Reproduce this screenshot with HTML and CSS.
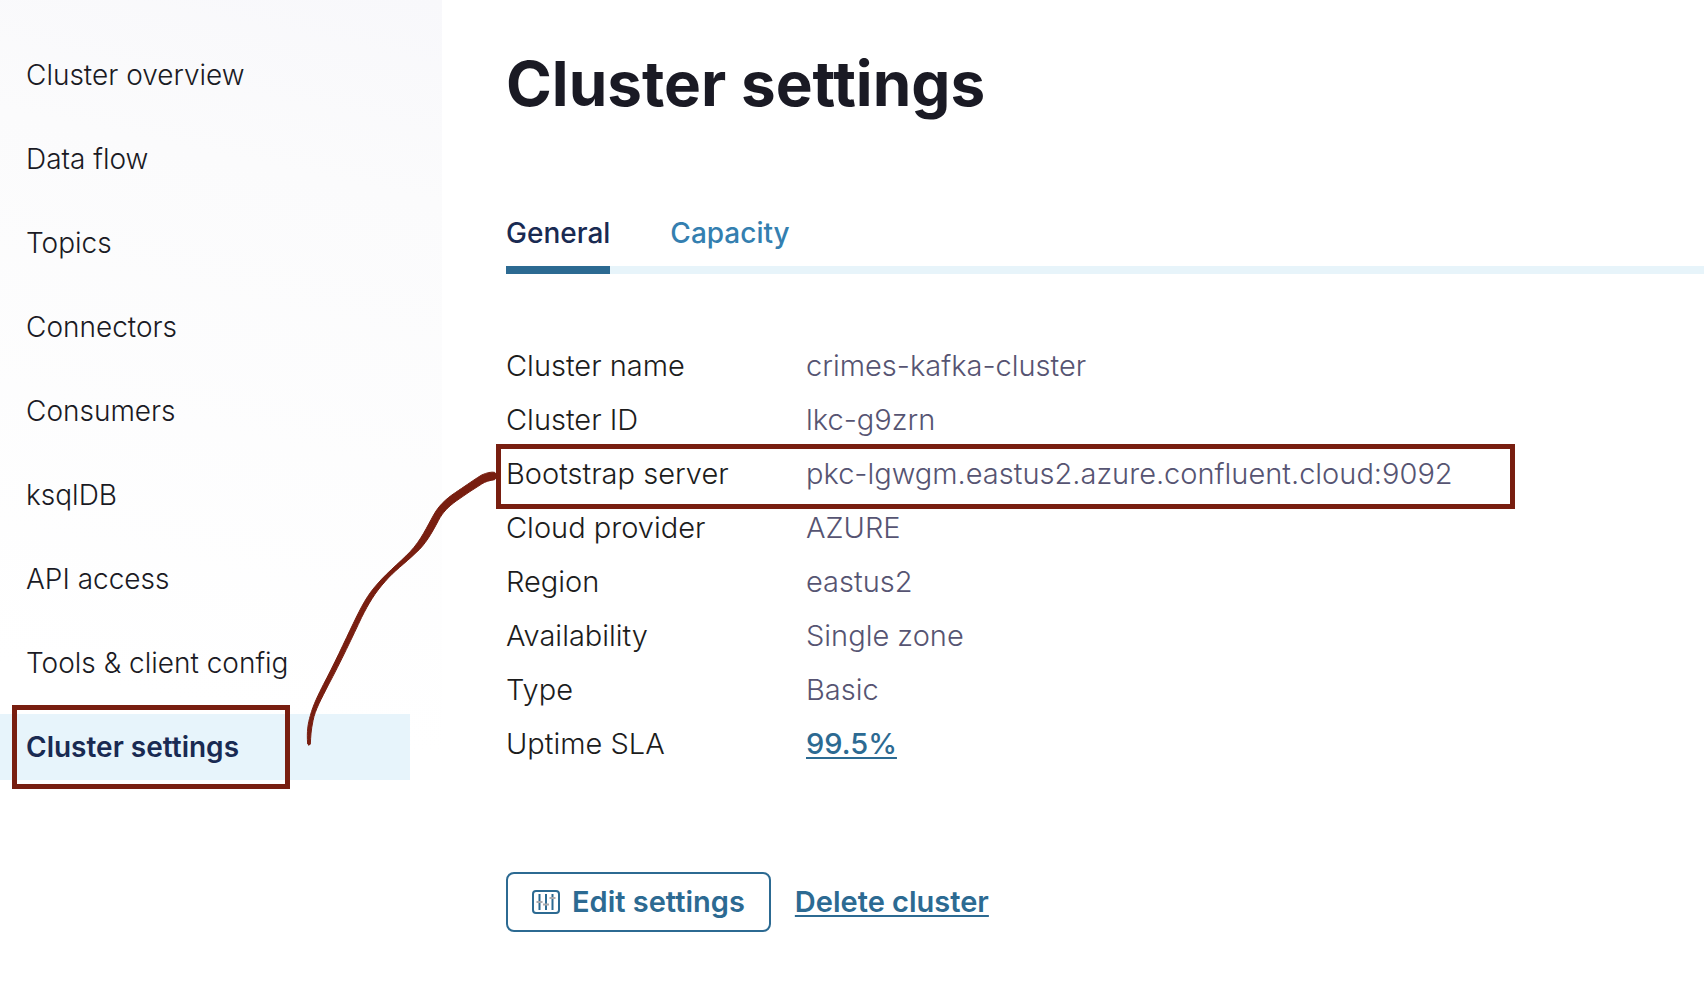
FILE: index.html
```html
<!DOCTYPE html>
<html lang="en">
<head>
<meta charset="utf-8">
<meta name="viewport" content="width=device-width, initial-scale=1">
<title>Cluster settings</title>
<link rel="stylesheet" href="styles.css">
</head>
<body>
<div class="page">
  <nav class="sidebar" aria-label="Cluster">
    <ul class="nav">
      <li class="nav-item"><a class="nav-link" href="#overview">Cluster overview</a></li>
      <li class="nav-item"><a class="nav-link" href="#flow">Data flow</a></li>
      <li class="nav-item"><a class="nav-link" href="#topics">Topics</a></li>
      <li class="nav-item"><a class="nav-link" href="#connectors">Connectors</a></li>
      <li class="nav-item"><a class="nav-link" href="#consumers">Consumers</a></li>
      <li class="nav-item"><a class="nav-link" href="#ksqldb">ksqlDB</a></li>
      <li class="nav-item"><a class="nav-link" href="#api">API access</a></li>
      <li class="nav-item"><a class="nav-link" href="#tools">Tools &amp; client config</a></li>
      <li class="nav-item nav-item-marked"><a class="nav-link nav-link-current" href="#settings" aria-current="page">Cluster settings</a></li>
    </ul>
  </nav>

  <main class="content">
    <h1 class="title">Cluster settings</h1>

    <div class="tabs" role="tablist">
      <button class="tab tab-active" type="button" role="tab" aria-selected="true">General</button>
      <button class="tab" type="button" role="tab" aria-selected="false">Capacity</button>
    </div>

    <dl class="details">
      <div class="row"><dt class="label">Cluster name</dt><dd class="value">crimes-kafka-cluster</dd></div>
      <div class="row"><dt class="label">Cluster ID</dt><dd class="value">lkc-g9zrn</dd></div>
      <div class="row row-marked"><dt class="label">Bootstrap server</dt><dd class="value">pkc-lgwgm.eastus2.azure.confluent.cloud:9092</dd></div>
      <div class="row"><dt class="label">Cloud provider</dt><dd class="value">AZURE</dd></div>
      <div class="row"><dt class="label">Region</dt><dd class="value">eastus2</dd></div>
      <div class="row"><dt class="label">Availability</dt><dd class="value">Single zone</dd></div>
      <div class="row"><dt class="label">Type</dt><dd class="value">Basic</dd></div>
      <div class="row"><dt class="label">Uptime SLA</dt><dd class="value"><a class="link" href="#sla">99.5%</a></dd></div>
    </dl>

    <div class="actions">
      <button class="edit" type="button">
        <svg class="edit-icon" viewBox="0 0 28 24" aria-hidden="true">
          <rect x="1" y="1" width="26" height="22" rx="3" fill="none" stroke="#2c6a92" stroke-width="2"/>
          <path d="M7.500 4v16M14 4v16M20.500 4v16" stroke="#2c6a92" stroke-width="2"/>
          <path d="M4.500 12h6M11 14.500h6M17.500 8h6" stroke="#a9a9ad" stroke-width="2"/>
        </svg>
        Edit settings
      </button>
      <a class="link" href="#delete">Delete cluster</a>
    </div>
  </main>

  <svg class="connector" viewBox="0 0 660 930" aria-hidden="true">
    <path fill="#781e10" stroke="#781e10" stroke-width="3" stroke-linejoin="round" d="M53 882C50 845 54 820 61 797C69 765 88 728 100 704C130 648 165 572 190 520C215 468 232 435 262 402C295 363 345 325 372 292C402 255 418 215 438 183C462 148 490 132 515 115C540 98 560 84 575 75C590 68 605 65 614 67L622 77L614 89C600 91 585 95 575 102C550 118 525 134 500 152C475 170 458 187 445 212C425 250 405 285 378 308C345 340 310 365 285 395C255 428 235 462 215 502C190 555 150 640 115 705C95 745 75 780 69 812C63 840 62 860 61 882Q57 890 53 882Z"/>
  </svg>
</div>
</body>
</html>
```
FILE: styles.css
```css
*,
*::after {
  box-sizing: border-box;
}

body {
  margin: 0;
  background: #fff;
  color: #1a1a24;
  font-family: Inter, "Liberation Sans", sans-serif;
  font-size: 28px;
  font-weight: 300;
  line-height: 34px;
}

.page {
  position: relative;
  display: flex;
  min-height: 100vh;
}

.sidebar {
  flex: 0 0 442px;
  padding: 42px 32px 42px 0;
  background: linear-gradient(192deg, #f8f8fb 0, #fbfbfc 200px, #fff 740px);
}

.nav {
  display: flex;
  flex-direction: column;
  gap: 18px;
  margin: 0;
  padding: 0;
  list-style: none;
}

.nav-item {
  position: relative;
}

.nav-link {
  display: block;
  padding: 16px 26px;
  color: inherit;
  text-decoration: none;
}

.nav-link-current {
  background: #e7f4fb;
  color: #192a52;
  font-weight: 600;
}

.nav-item-marked::after,
.row-marked::after {
  content: "";
  position: absolute;
  border: 5px solid #781e10;
  pointer-events: none;
}

.nav-item-marked::after {
  inset: -9px 120px -9px 12px;
}

.content {
  flex: 1;
  min-width: 0;
  padding: 44px 0 64px 64px;
}

.title {
  margin: 0;
  font-size: 62px;
  font-weight: 700;
  line-height: 80px;
}

.tabs {
  display: flex;
  gap: 60px;
  margin-top: 84px;
  box-shadow: inset 0 -8px #e7f4fa;
}

.tab {
  padding: 8px 0 16px;
  border: 0;
  border-bottom: 8px solid transparent;
  background: none;
  color: #347fb0;
  font: inherit;
  font-weight: 500;
}

.tab-active {
  border-color: #2c6a92;
  color: #192a52;
}

.details {
  margin: 65px 0 0;
  font-size: 29px;
}

.row {
  position: relative;
  display: grid;
  grid-template-columns: 300px 1fr;
  padding: 10px 0;
}

.row-marked::after {
  top: -3px;
  left: -10px;
  width: 1019px;
  height: 65px;
}

.label {
  color: #1c1c1c;
}

.value {
  margin: 0;
  color: #565472;
}

.link {
  color: #2c6a92;
  font-weight: 500;
  text-decoration-thickness: 2px;
  text-underline-offset: 3px;
  text-decoration-skip-ink: none;
}

.actions {
  display: flex;
  align-items: center;
  gap: 24px;
  margin-top: 101px;
  font-size: 29px;
}

.actions .link {
  font-weight: 600;
}

.edit {
  display: flex;
  align-items: center;
  gap: 12px;
  padding: 11px 24px;
  border: 2px solid #2c6a92;
  border-radius: 8px;
  background: #fff;
  color: #2c6a92;
  font: inherit;
  font-weight: 600;
}

.edit-icon {
  width: 28px;
  height: 24px;
}

.connector {
  position: absolute;
  top: 450px;
  left: 290px;
  width: 220px;
  height: 310px;
  pointer-events: none;
}
```
